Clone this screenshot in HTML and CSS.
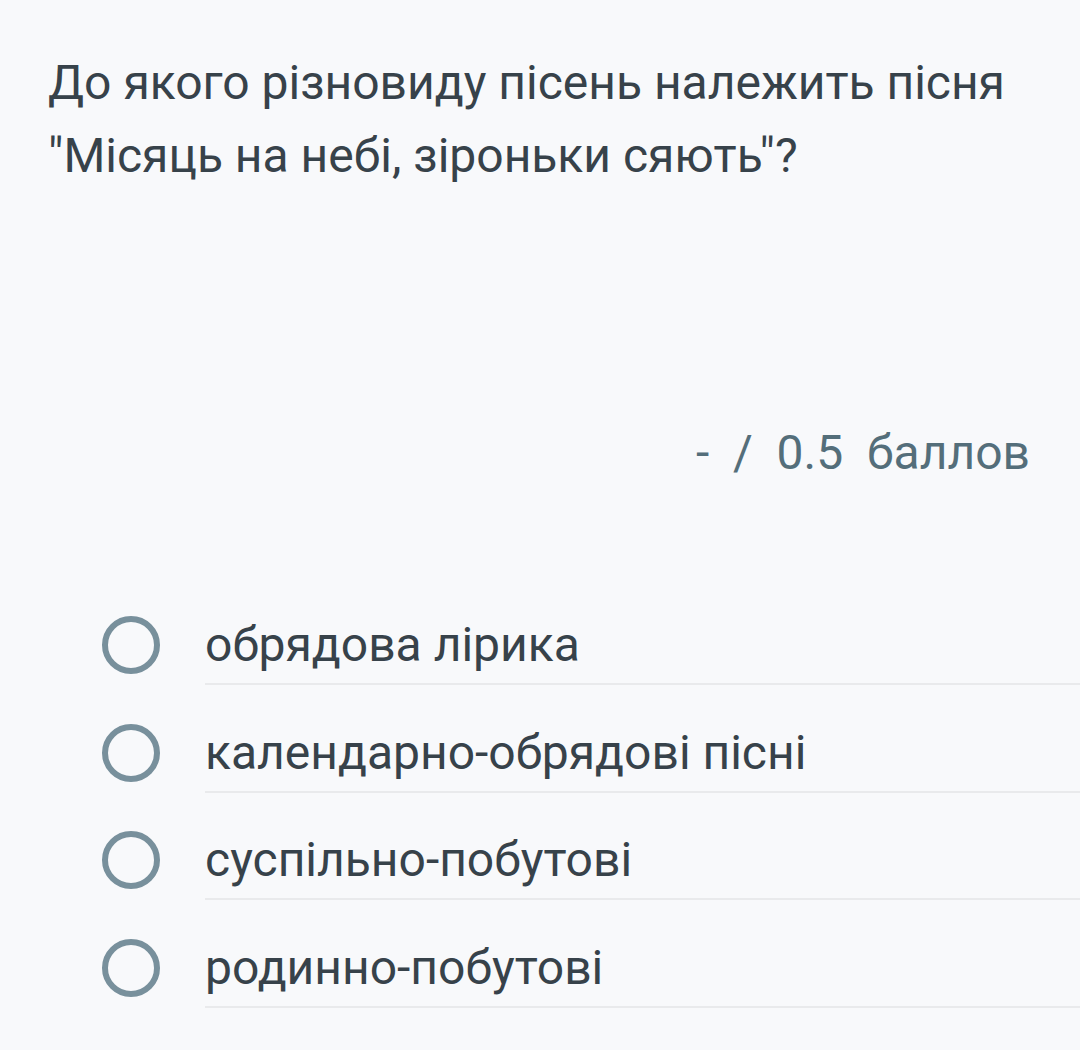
FILE: index.html
```html
<!DOCTYPE html>
<html lang="uk">
<head>
    <meta charset="UTF-8">
    <meta name="viewport" content="width=device-width, initial-scale=1.0">
    <title>Питання</title>
    <link rel="stylesheet" href="styles.css">
</head>
<body>
    <div class="question">
        <h1 class="question-title">До якого різновиду пісень належить пісня "Місяць на небі, зіроньки сяють"?</h1>

        <div class="score">-&nbsp; /&nbsp; 0.5&nbsp; баллов</div>

        <div class="options">
            <label class="option">
                <span class="radio"></span>
                <span class="option-text">обрядова лірика</span>
            </label>
            <label class="option">
                <span class="radio"></span>
                <span class="option-text">календарно-обрядові пісні</span>
            </label>
            <label class="option">
                <span class="radio"></span>
                <span class="option-text">суспільно-побутові</span>
            </label>
            <label class="option">
                <span class="radio"></span>
                <span class="option-text">родинно-побутові</span>
            </label>
        </div>
    </div>
</body>
</html>
```

FILE: styles.css
```css
* {
    margin: 0;
    padding: 0;
    box-sizing: border-box;
}

body {
    font-family: Roboto, "Noto Sans", sans-serif;
    background: #f8f9fb;
    color: #37424a;
    overflow: hidden;
}

.question {
    padding: 46px 0 0 48px;
}

.question-title {
    font-size: 48px;
    font-weight: 400;
    line-height: 73px;
    padding-right: 40px;
    color: #37424a;
}

.score {
    text-align: right;
    padding-right: 50px;
    margin-top: 231px;
    font-size: 48px;
    line-height: 60px;
    color: #546e7a;
}

.options {
    margin-top: 124px;
}

.option {
    display: flex;
    align-items: flex-start;
    margin-left: 54px;
    margin-bottom: 29.5px;
}

.radio {
    width: 58px;
    height: 58px;
    margin-top: 9px;
    border: 6px solid #78909c;
    border-radius: 50%;
    flex-shrink: 0;
    margin-right: 45px;
}

.option-text {
    flex: 1;
    font-size: 48px;
    line-height: 76px;
    border-bottom: 2px solid #e9eaec;
}
```
